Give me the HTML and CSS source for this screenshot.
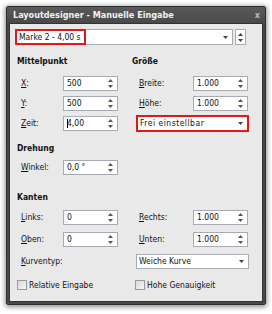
FILE: index.html
```html
<!DOCTYPE html>
<html>
<head>
<meta charset="utf-8">
<link rel="stylesheet" href="styles.css">
</head>
<body>
<div class="window">
  <div class="titlebar">
    <span class="title">Layoutdesigner - Manuelle Eingabe</span>
    <span class="close">x</span>
  </div>
  <div class="content">
    <div class="toprow">
      <div class="combo wide">
        <span class="marked">Marke 2 - 4,00 s</span>
        <svg class="arrow" width="5" height="3" viewBox="0 0 5 3"><path d="M0 0H5L2.5 3Z" fill="#444"/></svg>
      </div>
      <div class="spinbtn">
        <svg width="5" height="9" viewBox="0 0 5 9"><path d="M0 3H5L2.5 0Z M0 6H5L2.5 9Z" fill="#444"/></svg>
      </div>
    </div>

    <div class="pair first">
      <div class="col">
        <div class="head">Mittelpunkt</div>
        <div class="row"><span class="lbl l"><u>X</u>:</span><div class="spin">500<svg class="sp" width="5" height="9" viewBox="0 0 5 9"><path d="M0 3H5L2.5 0Z M0 6H5L2.5 9Z" fill="#555"/></svg></div></div>
        <div class="row"><span class="lbl l"><u>Y</u>:</span><div class="spin">500<svg class="sp" width="5" height="9" viewBox="0 0 5 9"><path d="M0 3H5L2.5 0Z M0 6H5L2.5 9Z" fill="#555"/></svg></div></div>
        <div class="row"><span class="lbl l"><u>Z</u>eit:</span><div class="spin"><span class="caret"></span>4,00<svg class="sp" width="5" height="9" viewBox="0 0 5 9"><path d="M0 3H5L2.5 0Z M0 6H5L2.5 9Z" fill="#555"/></svg></div></div>
      </div>
      <div class="col">
        <div class="head">Größe</div>
        <div class="row"><span class="lbl r"><u>B</u>reite:</span><div class="spin">1.000<svg class="sp" width="5" height="9" viewBox="0 0 5 9"><path d="M0 3H5L2.5 0Z M0 6H5L2.5 9Z" fill="#555"/></svg></div></div>
        <div class="row"><span class="lbl r"><u>H</u>öhe:</span><div class="spin">1.000<svg class="sp" width="5" height="9" viewBox="0 0 5 9"><path d="M0 3H5L2.5 0Z M0 6H5L2.5 9Z" fill="#555"/></svg></div></div>
        <div class="row"><div class="combo drop red"><span class="spaced">Frei einstellbar</span><svg class="arrow" width="5" height="3" viewBox="0 0 5 3"><path d="M0 0H5L2.5 3Z" fill="#444"/></svg></div></div>
      </div>
    </div>

    <div class="section drehung">
      <div class="head">Drehung</div>
      <div class="row"><span class="lbl l"><u>W</u>inkel:</span><div class="spin">0,0 °<svg class="sp" width="5" height="9" viewBox="0 0 5 9"><path d="M0 3H5L2.5 0Z M0 6H5L2.5 9Z" fill="#555"/></svg></div></div>
    </div>

    <div class="section kanten">
      <div class="head">Kanten</div>
      <div class="pair">
        <div class="col">
          <div class="row tall"><span class="lbl l"><u>L</u>inks:</span><div class="spin">0<svg class="sp" width="5" height="9" viewBox="0 0 5 9"><path d="M0 3H5L2.5 0Z M0 6H5L2.5 9Z" fill="#555"/></svg></div></div>
          <div class="row tall"><span class="lbl l"><u>O</u>ben:</span><div class="spin">0<svg class="sp" width="5" height="9" viewBox="0 0 5 9"><path d="M0 3H5L2.5 0Z M0 6H5L2.5 9Z" fill="#555"/></svg></div></div>
          <div class="row tall"><span class="lbl l"><u>K</u>urventyp:</span></div>
        </div>
        <div class="col">
          <div class="row tall"><span class="lbl r"><u>R</u>echts:</span><div class="spin">1.000<svg class="sp" width="5" height="9" viewBox="0 0 5 9"><path d="M0 3H5L2.5 0Z M0 6H5L2.5 9Z" fill="#555"/></svg></div></div>
          <div class="row tall"><span class="lbl r"><u>U</u>nten:</span><div class="spin">1.000<svg class="sp" width="5" height="9" viewBox="0 0 5 9"><path d="M0 3H5L2.5 0Z M0 6H5L2.5 9Z" fill="#555"/></svg></div></div>
          <div class="row tall"><div class="combo drop">Weiche Kurve<svg class="arrow" width="5" height="3" viewBox="0 0 5 3"><path d="M0 0H5L2.5 3Z" fill="#444"/></svg></div></div>
        </div>
      </div>
    </div>

    <div class="checks">
      <div class="check left"><span class="box"></span>Relative Eingabe</div>
      <div class="check"><span class="box"></span>Hohe Genauigkeit</div>
    </div>
  </div>
</div>
</body>
</html>
```

FILE: styles.css
```css
* { box-sizing: border-box; }
html, body { margin: 0; padding: 0; background: #ffffff; }
body {
  width: 272px;
  height: 314px;
  overflow: hidden;
  font-family: "DejaVu Sans Condensed", "DejaVu Sans", sans-serif;
  font-size: 8.5px;
  color: #111;
}
.window {
  margin: 6px 0 0 6px;
  width: 260px;
  height: 299px;
  background: linear-gradient(#5a5a5a, #454545 20px, #4a4a4a);
  border: 1px solid #2e2e2e;
  border-radius: 2px;
  box-shadow: 0 1px 5px 1px rgba(0,0,0,0.45);
  display: flex;
  flex-direction: column;
}
.titlebar {
  height: 16px;
  display: flex;
  align-items: center;
  justify-content: space-between;
  padding: 0 5px 0 6px;
  color: #f2f2f2;
}
.title {
  font-weight: bold;
  font-size: 9px;
}
.close {
  font-weight: bold;
  font-size: 9px;
  color: #bbbbbb;
}
.content {
  flex: 1;
  margin: 0 2px 2px 2px;
  background: #e9e9e9;
  border: 1px solid #333;
  padding: 5px 0 0 0;
  display: flex;
  flex-direction: column;
}
.toprow {
  display: flex;
  align-items: stretch;
  gap: 2px;
  height: 16px;
  padding-left: 5px;
}
.combo {
  background: #fff;
  border: 1px solid #a9abb2;
  display: flex;
  align-items: center;
  justify-content: space-between;
  padding: 0 4px 0 2px;
  height: 15px;
  position: relative;
}
.combo.wide {
  width: 218px;
  height: 16px;
  padding-left: 0;
}
.marked {
  border: 2px solid #e01818;
  height: 16px;
  margin: -1px 0 -1px -1px;
  padding: 0 2px;
  display: flex;
  align-items: center;
  width: 71px;
}
.spinbtn {
  width: 11px;
  background: #fff;
  border: 1px solid #a9abb2;
  display: flex;
  align-items: center;
  justify-content: center;
}
.pair {
  display: grid;
  grid-template-columns: 115px 1fr;
}
.pair.first { margin-top: 9px; padding-left: 7px; }
.head {
  font-weight: bold;
  font-size: 8.5px;
  height: 14px;
  line-height: 14px;
  color: #111;
}
.pair.first .head { margin-bottom: 5px; }
.row {
  display: flex;
  align-items: center;
  height: 20px;
}
.row.tall { height: 22px; }
.lbl { display: inline-block; }
.lbl.l { margin-left: 4px; width: 42px; }
.lbl.r { margin-left: 7px; width: 54px; }
.spin {
  width: 55px;
  height: 15px;
  background: #fff;
  border: 1px solid #a9abb2;
  display: flex;
  align-items: center;
  justify-content: space-between;
  padding: 0 4px 0 3px;
  position: relative;
}
.caret {
  position: absolute;
  left: 3px;
  top: 2px;
  width: 1px;
  height: 9px;
  background: #000;
}
.combo.drop {
  width: 113px;
  margin-left: 4px;
}
.combo.red {
  border: 2px solid #e01818;
  height: 17px;
}
.spaced { letter-spacing: 0.5px; }
.section { padding-left: 7px; }
.drehung { margin-top: 8px; }
.drehung .head { margin-bottom: 2px; }
.kanten { margin-top: 13px; }
.kanten .head { margin-bottom: 2px; }
.checks {
  display: grid;
  grid-template-columns: 118px 1fr;
  margin-top: 6px;
  padding-left: 7px;
  height: 14px;
  align-items: center;
}
.check {
  display: flex;
  align-items: center;
  gap: 2px;
}
.box {
  width: 10px;
  height: 10px;
  border: 1px solid #9a9a9a;
  background: linear-gradient(135deg, #d8d8d8, #f6f6f6);
}
```
